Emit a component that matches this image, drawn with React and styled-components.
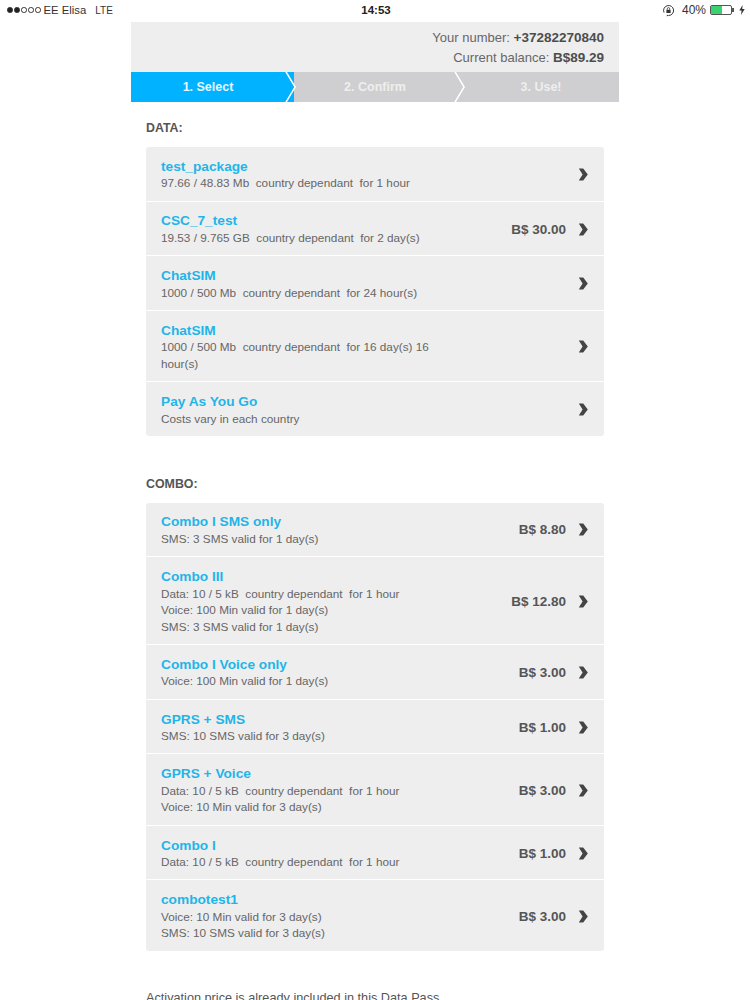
import React from "react";
import styled, { createGlobalStyle } from "styled-components";

const dataRows = [
  { name: "test_package", lines: ["97.66 / 48.83 Mb\u00a0 country dependant\u00a0 for 1 hour"] },
  { name: "CSC_7_test", lines: ["19.53 / 9.765 GB\u00a0 country dependant\u00a0 for 2 day(s)"], price: "B$ 30.00" },
  { name: "ChatSIM", lines: ["1000 / 500 Mb\u00a0 country dependant\u00a0 for 24 hour(s)"] },
  { name: "ChatSIM", lines: ["1000 / 500 Mb\u00a0 country dependant\u00a0 for 16 day(s) 16 hour(s)"] },
  { name: "Pay As You Go", lines: ["Costs vary in each country"] },
];

const comboRows = [
  { name: "Combo I SMS only", lines: ["SMS: 3 SMS valid for 1 day(s)"], price: "B$ 8.80" },
  {
    name: "Combo III",
    lines: [
      "Data: 10 / 5 kB\u00a0 country dependant\u00a0 for 1 hour",
      "Voice: 100 Min valid for 1 day(s)",
      "SMS: 3 SMS valid for 1 day(s)",
    ],
    price: "B$ 12.80",
  },
  { name: "Combo I Voice only", lines: ["Voice: 100 Min valid for 1 day(s)"], price: "B$ 3.00" },
  { name: "GPRS + SMS", lines: ["SMS: 10 SMS valid for 3 day(s)"], price: "B$ 1.00" },
  {
    name: "GPRS + Voice",
    lines: ["Data: 10 / 5 kB\u00a0 country dependant\u00a0 for 1 hour", "Voice: 10 Min valid for 3 day(s)"],
    price: "B$ 3.00",
  },
  { name: "Combo I", lines: ["Data: 10 / 5 kB\u00a0 country dependant\u00a0 for 1 hour"], price: "B$ 1.00" },
  {
    name: "combotest1",
    lines: ["Voice: 10 Min valid for 3 day(s)", "SMS: 10 SMS valid for 3 day(s)"],
    price: "B$ 3.00",
  },
];

const Chevron = () => (
  <ChevronIcon viewBox="0 0 10 13">
    <polygon points="0.8,0.6 5.2,0.6 9.8,6.5 5.2,12.4 0.8,12.4 4.6,6.5" fill="#444" />
  </ChevronIcon>
);

const PackageList = ({ rows }) => (
  <List>
    {rows.map((row, i) => (
      <Row key={i}>
        <RowText>
          <RowName>{row.name}</RowName>
          {row.lines.map((line, j) => (
            <RowLine key={j}>{line}</RowLine>
          ))}
        </RowText>
        {row.price && <Price>{row.price}</Price>}
        <Chevron />
      </Row>
    ))}
  </List>
);

const App = () => {
  return (
    <>
      <GlobalStyle />
      <StatusBar>
        <StatusLeft>
          <Signal>
            <Dot $on />
            <Dot $on />
            <Dot />
            <Dot />
            <Dot />
          </Signal>
          <Carrier>EE Elisa</Carrier>
          <Network>LTE</Network>
        </StatusLeft>
        <Clock>14:53</Clock>
        <StatusRight>
          <svg width="13" height="13" viewBox="0 0 13 13">
            <path d="M2 8.5A5 5 0 1 1 6.5 11.5" fill="none" stroke="#333" strokeWidth="1" />
            <path d="M6.5 11.5l-1.6-1.1v2.2z" fill="#333" />
            <rect x="4.4" y="5.8" width="4.2" height="3.2" fill="#333" />
            <path d="M5.3 5.8V4.8a1.2 1.2 0 0 1 2.4 0v1" fill="none" stroke="#333" strokeWidth="0.8" />
          </svg>
          <span>40%</span>
          <Battery>
            <BatteryLevel />
          </Battery>
          <svg width="6" height="10" viewBox="0 0 6 10">
            <polygon points="3.6,0 0.3,5.6 2.6,5.6 2,10 5.7,4 3.2,4" fill="#333" />
          </svg>
        </StatusRight>
      </StatusBar>

      <Page>
        <Account>
          <AccountLine>
            Your number: <strong>+37282270840</strong>
          </AccountLine>
          <AccountLine>
            Current balance: <strong>B$89.29</strong>
          </AccountLine>
        </Account>

        <Steps>
          <Step $active $width="163px" $pad="9px">1. Select</Step>
          <Step $width="169px" $pad="7px">2. Confirm</Step>
          <Step $last $width="156px">3. Use!</Step>
        </Steps>

        <Content>
          <Heading>DATA:</Heading>
          <PackageList rows={dataRows} />
          <Heading $combo>COMBO:</Heading>
          <PackageList rows={comboRows} />
          <Note>Activation price is already included in this Data Pass</Note>
        </Content>
      </Page>
    </>
  );
};

const GlobalStyle = createGlobalStyle`
  html, body {
    margin: 0;
    height: 1000px;
    overflow: hidden;
    background: #fff;
    font-family: "Liberation Sans", Arial, sans-serif;
  }
`;

const StatusBar = styled.div`
  height: 22px;
  padding: 0 5px 2px 7px;
  box-sizing: border-box;
  display: grid;
  grid-template-columns: 1fr auto 1fr;
  align-items: center;
  font-size: 12px;
  color: #333;
`;

const StatusLeft = styled.div`
  display: flex;
  align-items: center;
`;

const Signal = styled.div`
  display: flex;
  gap: 1.5px;
  margin-right: 3px;
`;

const Dot = styled.i`
  width: 5.5px;
  height: 5.5px;
  box-sizing: border-box;
  border-radius: 50%;
  border: 0.7px solid #333;
  background: ${(p) => (p.$on ? "#222" : "transparent")};
`;

const Carrier = styled.span`
  font-size: 11.3px;
`;

const Network = styled.span`
  margin-left: 9px;
  font-size: 10px;
`;

const Clock = styled.div`
  font-weight: bold;
  font-size: 11.5px;
  color: #222;
`;

const StatusRight = styled.div`
  display: flex;
  align-items: center;
  justify-content: flex-end;
  gap: 4px;

  svg:first-child {
    margin-right: 3px;
  }
`;

const Battery = styled.div`
  position: relative;
  width: 22px;
  height: 10px;
  box-sizing: border-box;
  border: 1px solid #555;
  border-radius: 2px;
  margin-right: 3px;

  &::after {
    content: "";
    position: absolute;
    right: -3px;
    top: 2px;
    width: 2px;
    height: 4px;
    background: #555;
  }
`;

const BatteryLevel = styled.div`
  width: 11px;
  height: 100%;
  background: #3bd16f;
`;

const Page = styled.div`
  width: 488px;
  margin: 0 auto;
`;

const Account = styled.div`
  height: 50px;
  box-sizing: border-box;
  background: #eeeeef;
  padding: 6px 15px 0 0;
  text-align: right;
  color: #666;
  font-size: 13px;

  strong {
    font-size: 13.5px;
    color: #4d4d4d;
  }
`;

const AccountLine = styled.div`
  line-height: 19.5px;
`;

const Steps = styled.div`
  display: flex;
  height: 30px;
`;

const Step = styled.div`
  position: relative;
  width: ${(p) => p.$width};
  padding-right: ${(p) => p.$pad || "0"};
  box-sizing: border-box;
  display: flex;
  align-items: center;
  justify-content: center;
  background: ${(p) => (p.$active ? "#00b2ff" : "#cfcfd1")};
  color: ${(p) => (p.$active ? "#e8f7ff" : "#eeeeee")};
  font-size: 12.5px;
  font-weight: bold;

  &::before,
  &::after {
    content: "";
    display: ${(p) => (p.$last ? "none" : "block")};
    position: absolute;
    top: 0;
    height: 100%;
  }

  /* white chevron between steps */
  &::after {
    left: calc(100% - 9px);
    width: 11px;
    z-index: 1;
    background: #fff;
    clip-path: polygon(0 0, 2px 0, 100% 50%, 2px 100%, 0 100%, 9px 50%);
  }

  /* tip of the step, same colour as the step */
  &::before {
    left: calc(100% - 9px);
    width: 9px;
    z-index: 2;
    background: ${(p) => (p.$active ? "#00b2ff" : "#cfcfd1")};
    clip-path: polygon(0 0, 100% 50%, 0 100%);
  }
`;

const Content = styled.div`
  padding: 0 15px;
`;

const Heading = styled.h3`
  margin: ${(p) => (p.$combo ? "41px 0 11.5px" : "19px 0 12px")};
  font-size: 12.4px;
  line-height: 14px;
  font-weight: bold;
  color: #555;
`;

const List = styled.div`
  display: flex;
  flex-direction: column;
  gap: 1px;
  border-radius: 3px;
  overflow: hidden;
`;

const Row = styled.div`
  display: flex;
  align-items: center;
  padding: 11.8px 16px 8.8px 15px;
  background: #eeeeef;
`;

const RowText = styled.div`
  width: 280px;
  margin-right: auto;
`;

const RowName = styled.div`
  font-size: 13.7px;
  line-height: 16.5px;
  font-weight: bold;
  color: #1fb5e8;
`;

const RowLine = styled.div`
  font-size: 11.75px;
  line-height: 16.6px;
  color: #666;
`;

const Price = styled.div`
  margin: -2px 12px 0 0;
  font-size: 13.5px;
  font-weight: bold;
  color: #555;
`;

const ChevronIcon = styled.svg`
  width: 10px;
  height: 13px;
  margin-top: -2px;
  flex-shrink: 0;
`;

const Note = styled.p`
  margin: 39px 0 0;
  font-size: 12.7px;
  line-height: 16px;
  color: #555;
`;

export default App;
